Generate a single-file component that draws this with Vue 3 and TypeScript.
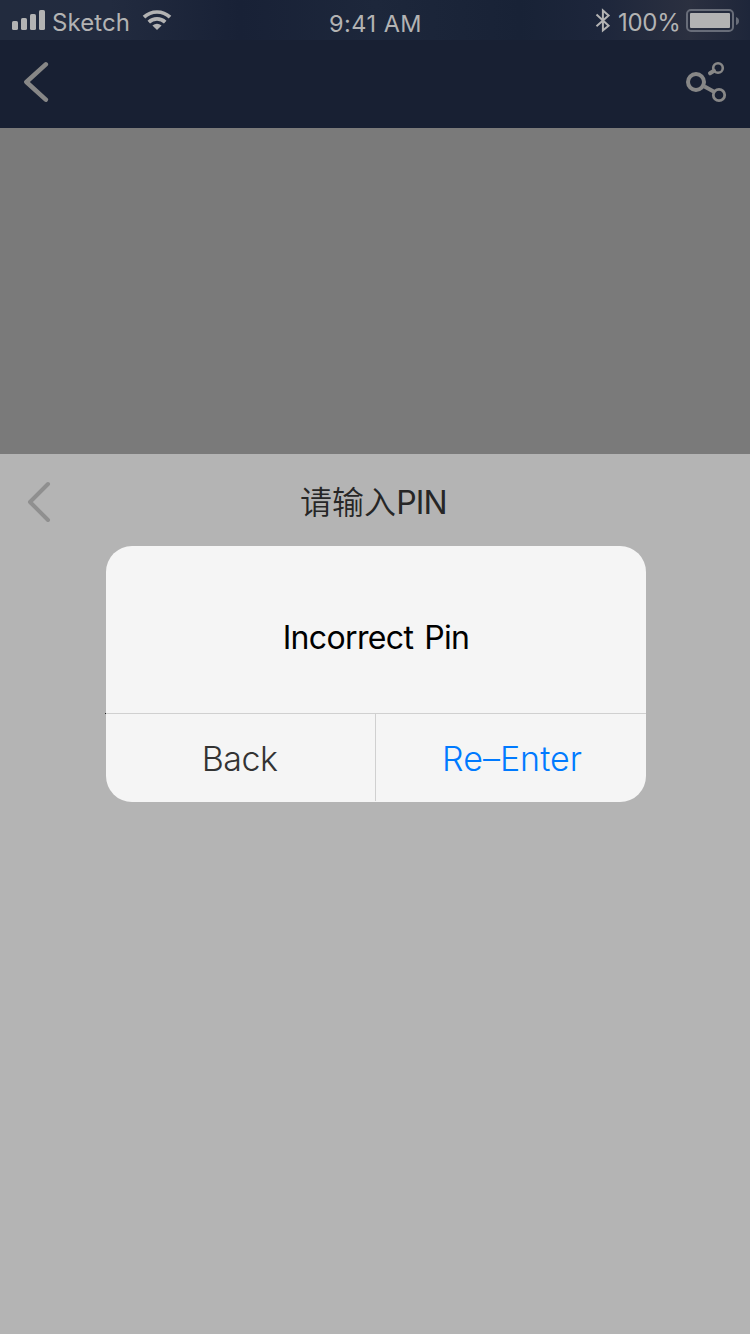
<script setup lang="ts">
const title: string = '请输入'
const message: string = 'Incorrect Pin'
</script>

<template>
  <main class="screen">
    <header class="status">
      <div class="status-side">
        <svg class="signal" width="34" height="21" viewBox="0 0 34 21" fill="#b3b3b3">
          <rect x="0" y="12" width="6" height="9" rx="1.6" />
          <rect x="9" y="9" width="6" height="12" rx="1.6" />
          <rect x="18" y="5" width="6" height="16" rx="1.6" />
          <rect x="27" y="1" width="6" height="20" rx="1.6" />
        </svg>
        <span class="carrier">Sketch</span>
        <svg class="wifi" width="30" height="22" viewBox="0 0 30 22">
          <g fill="none" stroke="#b3b3b3" stroke-width="3.7">
            <path d="M2 8.2A18.8 18.8 0 0 1 28 8.2" />
            <path d="M6.8 13.2A12 12 0 0 1 23.2 13.2" />
          </g>
          <path d="M15 21L10.4 16.6Q15 13 19.6 16.6Z" fill="#b3b3b3" />
        </svg>
      </div>
      <span class="clock">9:41 AM</span>
      <div class="status-side right">
        <svg class="bluetooth" width="16" height="26" viewBox="0 0 16 26" fill="none" stroke="#b3b3b3" stroke-width="2">
          <path d="M1.5 6.6L13.6 17.8L7.9 22.4V2.4L13.6 7.4L1.5 18.2" />
        </svg>
        <span class="percent">100%</span>
        <svg class="battery" width="54" height="24" viewBox="0 0 54 24">
          <rect x="1" y="1" width="46" height="21" rx="4" fill="none" stroke="#686d79" stroke-width="2" />
          <rect x="4" y="4" width="40" height="15" rx="1" fill="#b3b3b3" />
          <path d="M50 8Q53 9 53 12T50 16Z" fill="#686d79" />
        </svg>
      </div>
    </header>
    <nav class="nav">
      <svg width="26" height="42" viewBox="0 0 26 42" fill="none" stroke="#878787" stroke-width="4.6" stroke-linecap="round" stroke-linejoin="round">
        <path d="M21.8 3.4L2.4 21L21.8 38.6" />
      </svg>
      <svg width="42" height="42" viewBox="0 0 42 42" fill="none" stroke="#878787">
        <path d="M24 12.3L28 9.8" stroke-width="4" stroke-linecap="round" />
        <path d="M18.5 25.5L28.5 31" stroke-width="4" />
        <circle cx="10" cy="21" r="8" stroke-width="4" />
        <circle cx="32" cy="7" r="4.8" stroke-width="2.6" />
        <circle cx="33" cy="34" r="5.7" stroke-width="2.8" />
      </svg>
    </nav>
    <section class="banner"></section>
    <section class="panel">
      <svg class="panel-back" width="26" height="42" viewBox="0 0 26 42" fill="none" stroke="#8f8f8f" stroke-width="4" stroke-linecap="round" stroke-linejoin="round">
        <path d="M21 3L3 21L21 39" />
      </svg>
      <h1 class="heading">{{ title }}<span class="latin">PIN</span></h1>
    </section>
    <div class="overlay">
      <div class="dialog" role="dialog">
        <p class="message">{{ message }}</p>
        <div class="actions">
          <button class="action"><span class="back-label">Back</span></button>
          <button class="action primary"><span class="enter-label">Re–Enter</span></button>
        </div>
        <i class="speck"></i>
      </div>
    </div>
  </main>
</template>

<style>
body {
  margin: 0;
}
</style>

<style scoped>
.screen {
  position: relative;
  display: flex;
  flex-direction: column;
  width: 750px;
  height: 1334px;
  overflow: hidden;
  background: #b4b4b4;
  font-family: Inter, "Noto Sans CJK SC", sans-serif;
}
.status {
  display: grid;
  grid-template-columns: 1fr auto 1fr;
  box-sizing: border-box;
  height: 40px;
  padding: 0 10px 0 12px;
  background: linear-gradient(90deg, #222b3e 0, #222b3f 110px, #182136 240px, #1d273b 375px, #182236 520px, #1d263b 600px, #2b3040 690px, #1e263a 750px);
  color: #b3b3b3;
  font-size: 24px;
  line-height: 46px;
  white-space: nowrap;
}
.status-side {
  display: flex;
  align-items: flex-start;
}
.right {
  justify-content: flex-end;
}
.signal {
  margin-top: 9px;
}
.carrier {
  width: 84px;
  margin-left: 6px;
  font-size: 24px;
  letter-spacing: 0.1px;
}
.wifi {
  margin: 9px 0 0 6px;
}
.clock {
  margin-right: 1px;
  font-size: 23.5px;
  letter-spacing: 0.5px;
  line-height: 48px;
}
.bluetooth {
  margin: 8px 7px 0 0;
}
.percent {
  width: 62px;
  margin-right: 6px;
  font-size: 24px;
  letter-spacing: -0.3px;
}
.battery {
  margin-top: 9px;
}
.nav {
  display: flex;
  align-items: center;
  justify-content: space-between;
  box-sizing: border-box;
  height: 88px;
  padding: 0 22px 4px 24px;
  background: #182033;
}
.banner {
  height: 326px;
  background: #7a7a7a;
}
.panel {
  display: grid;
  grid-template-columns: 1fr auto 1fr;
  align-items: center;
  box-sizing: border-box;
  height: 96px;
  padding: 0 30px 0 27px;
}
.heading {
  margin: 2px 0 0;
  color: #262626;
  font-size: 32px;
  font-weight: 350;
  line-height: 48px;
  white-space: nowrap;
}
.latin {
  font-weight: 400;
  letter-spacing: -0.8px;
}
.overlay {
  position: absolute;
  inset: 0;
}
.dialog {
  position: relative;
  width: 540px;
  height: 256px;
  margin: 546px 0 0 106px;
  border-radius: 26px;
  background: #f5f5f5;
}
.message {
  box-sizing: border-box;
  height: 168px;
  margin: 0;
  padding-top: 14px;
  border-bottom: 1px solid #d0d0d0;
  color: #000;
  font-size: 32px;
  letter-spacing: -0.65px;
  word-spacing: 2.6px;
  line-height: 156px;
  text-align: center;
}
.actions {
  display: flex;
  height: 88px;
}
.action {
  width: 269px;
  padding: 0;
  border: 0;
  background: none;
  color: #333;
  font: 300 34px/90px Inter, sans-serif;
}
.back-label {
  margin-right: 2px;
  letter-spacing: -0.5px;
}
.primary {
  width: 271px;
  height: 87px;
  border-left: 1px solid #d0d0d0;
  color: #007aff;
}
.enter-label {
  margin-left: 2px;
}
.action span {
  display: block;
  height: 88px;
}
.speck {
  position: absolute;
  left: -1px;
  top: 167px;
  width: 1px;
  height: 1px;
  background: #222;
}
</style>
